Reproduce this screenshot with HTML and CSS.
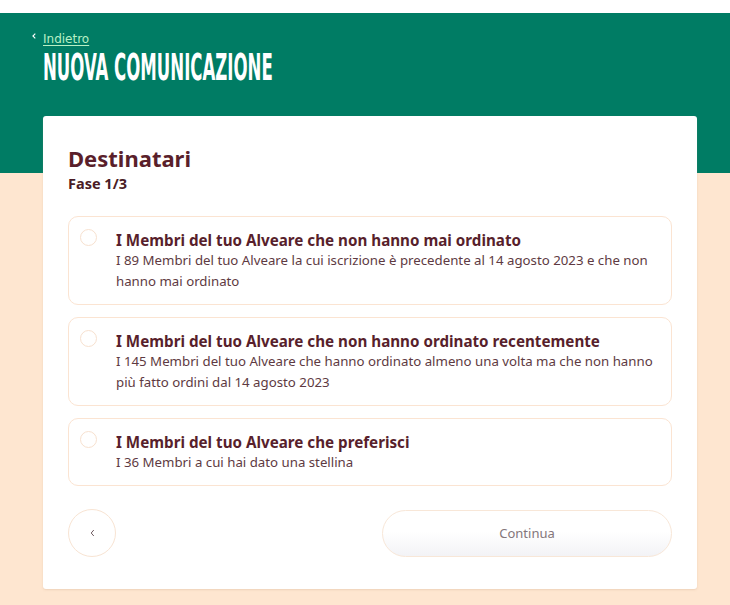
FILE: index.html
```html
<!DOCTYPE html>
<html lang="it">
<head>
<meta charset="utf-8">
<title>Nuova comunicazione</title>
<link rel="stylesheet" href="styles.css">
</head>
<body>
<div class="topstrip"></div>
<header class="hero">
  <a class="back-link" href="#">
    <svg class="chev" width="4" height="6" viewBox="0 0 4 6" aria-hidden="true"><path d="M3.3 0.6 L0.9 3 L3.3 5.4" fill="none" stroke="#ffffff" stroke-width="1.1"/></svg>
    <span class="back-text">Indietro</span>
  </a>
  <h1 class="page-title"><span class="page-title-inner">NUOVA COMUNICAZIONE</span></h1>
</header>
<main class="main">
  <section class="card">
    <h2 class="card-title">Destinatari</h2>
    <p class="step">Fase 1/3</p>
    <div class="options">
      <label class="option">
        <span class="radio"></span>
        <span class="option-text">
          <span class="option-title">I Membri del tuo Alveare che non hanno mai ordinato</span>
          <span class="option-desc">I 89 Membri del tuo Alveare la cui iscrizione è precedente al 14 agosto 2023 e che non hanno mai ordinato</span>
        </span>
      </label>
      <label class="option">
        <span class="radio"></span>
        <span class="option-text">
          <span class="option-title">I Membri del tuo Alveare che non hanno ordinato recentemente</span>
          <span class="option-desc">I 145 Membri del tuo Alveare che hanno ordinato almeno una volta ma che non hanno più fatto ordini dal 14 agosto 2023</span>
        </span>
      </label>
      <label class="option">
        <span class="radio"></span>
        <span class="option-text">
          <span class="option-title">I Membri del tuo Alveare che preferisci</span>
          <span class="option-desc">I 36 Membri a cui hai dato una stellina</span>
        </span>
      </label>
    </div>
    <div class="actions">
      <button class="btn-back" type="button" aria-label="Indietro">
        <svg width="5" height="8" viewBox="0 0 5 8" aria-hidden="true"><path d="M3.8 1 L1.2 4 L3.8 7" fill="none" stroke="#6f5b61" stroke-width="1"/></svg>
      </button>
      <button class="btn-continue" type="button">Continua</button>
    </div>
  </section>
</main>
</body>
</html>
```
FILE: styles.css
```css
html, body {
  margin: 0;
  padding: 0;
}
body {
  background: #fee6d0;
  font-family: "Noto Sans", "Open Sans", sans-serif;
  color: #5a2230;
  width: 730px;
  height: 605px;
  overflow: hidden;
}
.topstrip {
  height: 13px;
  background: #ffffff;
}
.hero {
  background: #007c64;
  height: 160px;
  padding: 19px 0 0 43px;
  box-sizing: border-box;
}
.back-link {
  display: flex;
  align-items: flex-start;
  margin-left: -11px;
  text-decoration: none;
  height: 14px;
}
.chev {
  display: block;
  flex: none;
  margin: 1px 7px 0 0;
}
.back-text {
  color: #b8f0c4;
  font-family: "DejaVu Sans", sans-serif;
  font-size: 12px;
  line-height: 14px;
  text-decoration: underline;
  text-underline-offset: 2px;
}
.page-title {
  margin: 4px 0 0 0;
  height: 36px;
  font-family: "DejaVu Sans Condensed", "DejaVu Sans", sans-serif;
  font-weight: bold;
  font-size: 37px;
  line-height: 36px;
  color: #ffffff;
  white-space: nowrap;
}
.page-title-inner {
  display: inline-block;
  transform: scaleX(0.498);
  transform-origin: left center;
}
.main {
  padding: 0 33px 0 43px;
  margin-top: -57px;
}
.card {
  background: #ffffff;
  border-radius: 3px;
  padding: 27px 25px 32px 25px;
  box-shadow: 0 1px 2px rgba(190, 150, 120, 0.25);
}
.card-title {
  margin: 0;
  font-size: 22px;
  line-height: 30px;
  font-weight: bold;
  color: #5a1f2b;
}
.step {
  margin: 0 0 23px 0;
  font-size: 14.5px;
  line-height: 20px;
  font-weight: bold;
  color: #4a1c26;
}
.options {
  display: flex;
  flex-direction: column;
  gap: 12px;
}
.option {
  display: flex;
  align-items: flex-start;
  border: 1px solid #fbe4d2;
  border-radius: 10px;
  padding: 13px 16px 12px 11px;
}
.radio {
  flex: none;
  width: 15px;
  height: 15px;
  border: 1px solid #f7e1cf;
  border-radius: 50%;
  margin: -1px 19px 0 0;
}
.option-text {
  display: flex;
  flex-direction: column;
}
.option-title {
  font-size: 15.2px;
  line-height: 20px;
  font-weight: bold;
  color: #581f2c;
}
.option-desc {
  font-size: 13.25px;
  line-height: 21px;
  color: #5e3a42;
}
.actions {
  display: flex;
  justify-content: space-between;
  align-items: center;
  margin-top: 23px;
}
.btn-back {
  width: 48px;
  height: 48px;
  border: 1px solid #f8e4d3;
  border-radius: 50%;
  background: #ffffff;
  padding: 0;
  display: flex;
  align-items: center;
  justify-content: center;
}
.btn-back svg {
  display: block;
}
.btn-continue {
  width: 290px;
  height: 47px;
  border: 1px solid #f8e7d8;
  border-radius: 24px;
  background: linear-gradient(to bottom, #ffffff 45%, #f3f3f6 100%);
  color: #84767b;
  font-family: "Noto Sans", sans-serif;
  font-size: 13px;
  padding: 0;
}
```
